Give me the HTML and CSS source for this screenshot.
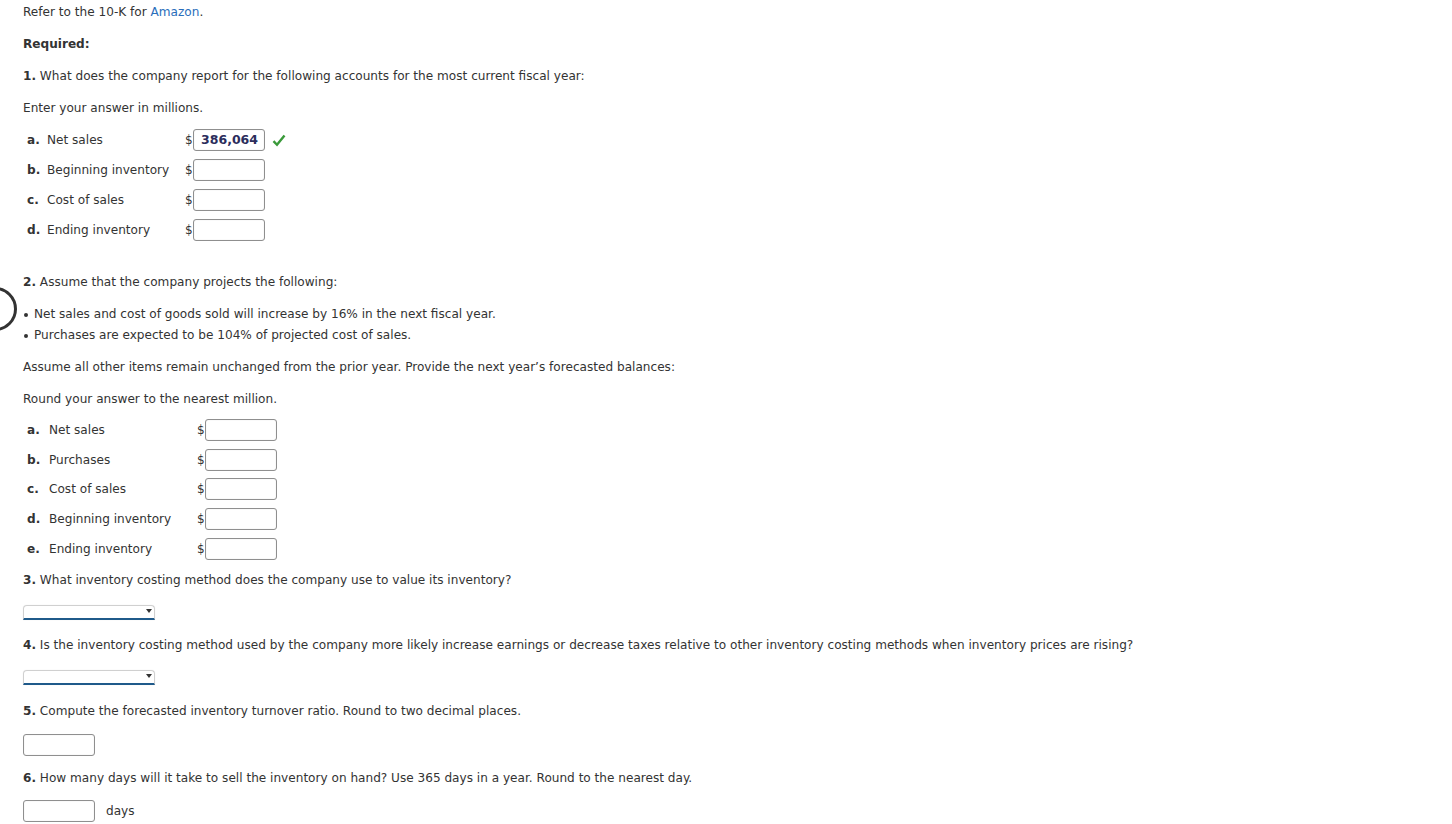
FILE: index.html
```html
<!DOCTYPE html>
<html>
<head>
<meta charset="utf-8">
<link rel="stylesheet" href="styles.css">
</head>
<body>
<div class="ring"></div>
<div class="page">
  <p class="p">Refer to the 10-K for <span class="link">Amazon</span>.</p>
  <p class="p"><b>Required:</b></p>
  <p class="p"><b>1.</b> What does the company report for the following accounts for the most current fiscal year:</p>
  <p class="p">Enter your answer in millions.</p>
  <div class="tbl tbl1">
    <div class="row"><b class="lt">a.</b><span class="lbl">Net sales</span><span class="cell"><span class="dol">$</span><span class="inp filled">386,064</span><svg class="check" width="14" height="13" viewBox="0 0 14 13"><path d="M1.5 7.2 L5 10.8 L12.5 1.5" fill="none" stroke="#3a9a3a" stroke-width="2.4"/></svg></span></div>
    <div class="row"><b class="lt">b.</b><span class="lbl">Beginning inventory</span><span class="cell"><span class="dol">$</span><span class="inp"></span></span></div>
    <div class="row"><b class="lt">c.</b><span class="lbl">Cost of sales</span><span class="cell"><span class="dol">$</span><span class="inp"></span></span></div>
    <div class="row"><b class="lt">d.</b><span class="lbl">Ending inventory</span><span class="cell"><span class="dol">$</span><span class="inp"></span></span></div>
  </div>
  <p class="p sec2"><b>2.</b> Assume that the company projects the following:</p>
  <ul class="bul">
    <li>Net sales and cost of goods sold will increase by 16% in the next fiscal year.</li>
    <li>Purchases are expected to be 104% of projected cost of sales.</li>
  </ul>
  <p class="p">Assume all other items remain unchanged from the prior year. Provide the next year’s forecasted balances:</p>
  <p class="p">Round your answer to the nearest million.</p>
  <div class="tbl tbl2">
    <div class="row"><b class="lt">a.</b><span class="lbl">Net sales</span><span class="cell"><span class="dol">$</span><span class="inp"></span></span></div>
    <div class="row"><b class="lt">b.</b><span class="lbl">Purchases</span><span class="cell"><span class="dol">$</span><span class="inp"></span></span></div>
    <div class="row"><b class="lt">c.</b><span class="lbl">Cost of sales</span><span class="cell"><span class="dol">$</span><span class="inp"></span></span></div>
    <div class="row"><b class="lt">d.</b><span class="lbl">Beginning inventory</span><span class="cell"><span class="dol">$</span><span class="inp"></span></span></div>
    <div class="row"><b class="lt">e.</b><span class="lbl">Ending inventory</span><span class="cell"><span class="dol">$</span><span class="inp"></span></span></div>
  </div>
  <p class="p q3"><b>3.</b> What inventory costing method does the company use to value its inventory?</p>
  <div class="sel"><span class="arrow"></span></div>
  <p class="p q4"><b>4.</b> Is the inventory costing method used by the company more likely increase earnings or decrease taxes relative to other inventory costing methods when inventory prices are rising?</p>
  <div class="sel"><span class="arrow"></span></div>
  <p class="p q5"><b>5.</b> Compute the forecasted inventory turnover ratio. Round to two decimal places.</p>
  <div class="ans"><span class="inp"></span></div>
  <p class="p q6"><b>6.</b> How many days will it take to sell the inventory on hand? Use 365 days in a year. Round to the nearest day.</p>
  <div class="ans"><span class="inp"></span><span class="unit">days</span></div>
</div>
</body>
</html>
```
FILE: styles.css
```css
html, body { margin: 0; padding: 0; background: #fff; }
body {
  font-family: "DejaVu Sans", Verdana, sans-serif;
  font-size: 12.1px;
  color: #333;
  overflow: hidden;
  height: 824px;
  position: relative;
}
.page { padding: 4px 0 0 23px; }
.p { margin: 0 0 16px 0; line-height: 16px; }
.p b { color: #333; }
.link { color: #2a6ebb; }
.tbl1 { margin-top: -7px; }
.tbl2 { margin-top: -8px; }
.row { display: grid; align-items: center; height: 30px; }
.tbl1 .row { grid-template-columns: 20px 138px auto; padding-left: 4px; }
.tbl2 .row { grid-template-columns: 22px 148px auto; padding-left: 4px; height: 29.8px; }
.lt { font-weight: bold; }
.cell { display: flex; align-items: center; }
.dol { font-size: 12px; width: 8px; }
.inp {
  display: inline-block;
  box-sizing: border-box;
  width: 72px;
  height: 22px;
  border: 1px solid #8f8f8f;
  border-radius: 3px;
  background: #fff;
  box-shadow: inset 0 0 1px #ccc;
}
.filled {
  text-align: right;
  padding-right: 6px;
  line-height: 20px;
  font-weight: bold;
  font-size: 12.5px;
  color: #2b2d5c;
}
.check { margin-left: 7px; }
.sec2 { margin-top: 29px; }
.bul { margin: 0 0 16px 0; padding: 0; list-style: none; }
.bul li { line-height: 16px; position: relative; padding-left: 11px; }
.bul li + li { margin-top: 5px; }
.bul li::before {
  content: "";
  position: absolute;
  left: 1px; top: 7px;
  width: 4px; height: 4px;
  border-radius: 50%;
  background: #333;
}
.q3 { margin-top: 8px; margin-bottom: 17px; }
.q4 { margin-top: 17px; margin-bottom: 17px; }
.q5 { margin-top: 18px; margin-bottom: 15px; }
.q6 { margin-top: 14px; margin-bottom: 14px; }
.sel {
  box-sizing: border-box;
  width: 132px;
  height: 15px;
  border: 1px solid #d0d0d0;
  border-bottom: 2px solid #1f5a8a;
  border-radius: 4px 4px 0 0;
  position: relative;
  box-shadow: 0 0 1px #ddd;
}
.arrow {
  position: absolute;
  right: 2px; top: 3px;
  width: 0; height: 0;
  border-left: 3.5px solid transparent;
  border-right: 3.5px solid transparent;
  border-top: 4px solid #333;
}
.ans { display: flex; align-items: center; }
.unit { margin-left: 11px; }
.ring {
  position: absolute;
  left: -27px; top: 287px;
  width: 38px; height: 38px;
  border: 3px solid #333;
  border-radius: 50%;
}
```
